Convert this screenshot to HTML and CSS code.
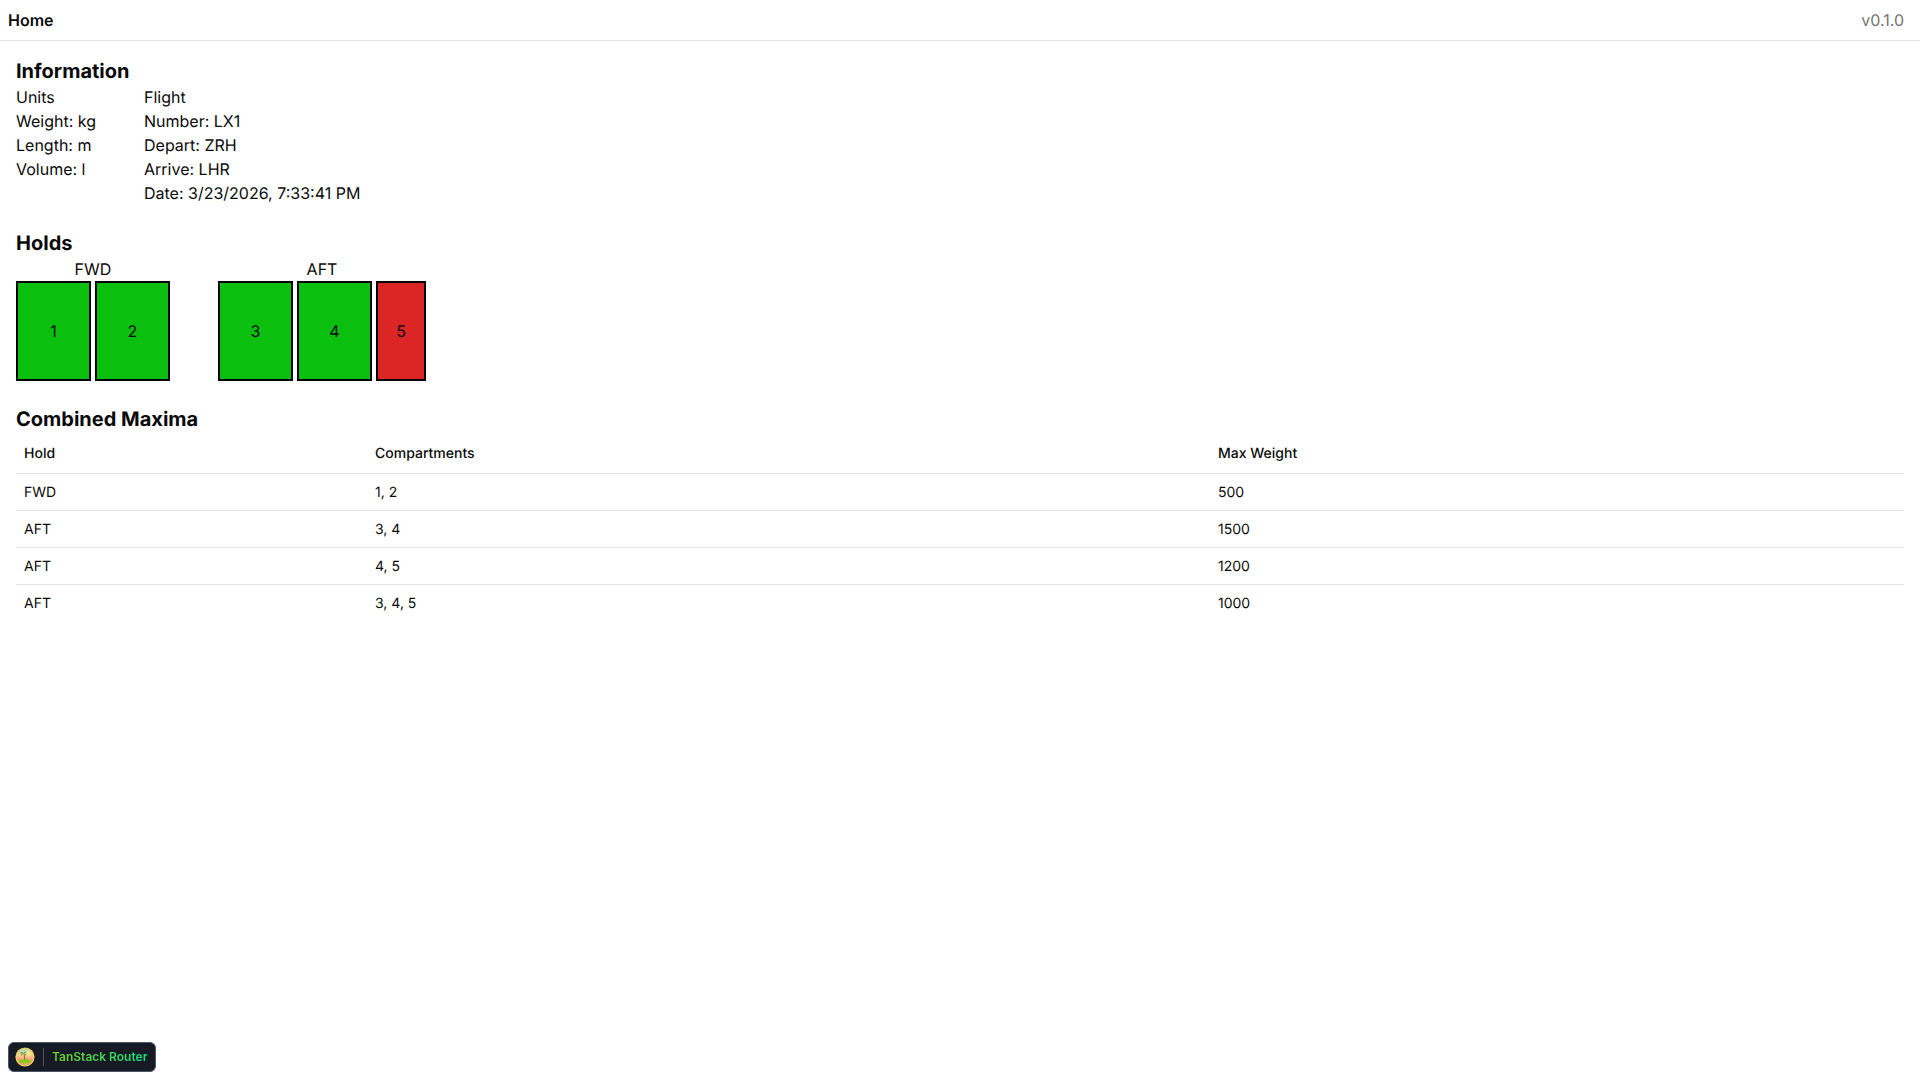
FILE: index.html
```html
<!DOCTYPE html>
<html lang="en">
<head>
    <meta charset="UTF-8">
    <meta name="viewport" content="width=device-width, initial-scale=1.0">
    <title>Home</title>
    <link rel="stylesheet" href="styles.css">
</head>
<body>
    <header class="topbar">
        <a class="home-link" href="#">Home</a>
        <span class="version">v0.1.0</span>
    </header>
    <main class="content">
        <section class="section">
            <h2>Information</h2>
            <div class="info-grid">
                <div class="info-col">
                    <div>Units</div>
                    <div>Weight: kg</div>
                    <div>Length: m</div>
                    <div>Volume: l</div>
                </div>
                <div>
                    <div>Flight</div>
                    <div>Number: LX1</div>
                    <div>Depart: ZRH</div>
                    <div>Arrive: LHR</div>
                    <div>Date: 3/23/2026, 7:33:41 PM</div>
                </div>
            </div>
        </section>
        <section class="section">
            <h2>Holds</h2>
            <div class="holds">
                <div class="hold">
                    <div class="hold-name">FWD</div>
                    <div class="compartments">
                        <div class="compartment ok">1</div>
                        <div class="compartment ok">2</div>
                    </div>
                </div>
                <div class="hold">
                    <div class="hold-name">AFT</div>
                    <div class="compartments">
                        <div class="compartment ok">3</div>
                        <div class="compartment ok">4</div>
                        <div class="compartment narrow over">5</div>
                    </div>
                </div>
            </div>
        </section>
        <section class="section">
            <h2>Combined Maxima</h2>
            <table class="maxima">
                <thead>
                    <tr>
                        <th class="col-hold">Hold</th>
                        <th class="col-comp">Compartments</th>
                        <th>Max Weight</th>
                    </tr>
                </thead>
                <tbody>
                    <tr><td>FWD</td><td>1, 2</td><td>500</td></tr>
                    <tr><td>AFT</td><td>3, 4</td><td>1500</td></tr>
                    <tr><td>AFT</td><td>4, 5</td><td>1200</td></tr>
                    <tr><td>AFT</td><td>3, 4, 5</td><td>1000</td></tr>
                </tbody>
            </table>
        </section>
    </main>
    <button class="devtools" type="button">
        <svg class="devtools-logo" viewBox="0 0 20 20" width="20" height="20" aria-hidden="true">
            <defs>
                <linearGradient id="sky" x1="0" y1="0" x2="0" y2="1">
                    <stop offset="0" stop-color="#a5e0c0"/>
                    <stop offset="0.4" stop-color="#fdd08a"/>
                    <stop offset="0.75" stop-color="#fb8a80"/>
                </linearGradient>
            </defs>
            <circle cx="10" cy="10" r="9.6" fill="#edd04a"/>
            <circle cx="10" cy="10" r="8.3" fill="url(#sky)"/>
            <circle cx="13.8" cy="6" r="2.5" fill="#fde68a"/>
            <path d="M2.4 13.2 H17.6 A8.3 8.3 0 0 1 2.4 13.2 Z" fill="#f59e7a"/>
            <path d="M3.6 14.8 C5.5 11 14.5 11 16.4 14.8 C14 16.8 6 16.8 3.6 14.8 Z" fill="#84cc16"/>
            <path d="M9.3 12.4 C9.5 10 9.1 8 8.4 6.6 L9 6.4 C9.9 8 10.2 10.2 10.1 12.4 Z" fill="#7a4a21"/>
            <path d="M8.7 6.6 C7.6 5 5.8 5 4.6 6.3 C5.9 6 7 6.1 8.7 6.6 Z M8.7 6.6 C7.6 6.7 5.9 7.4 5.6 9.2 C6.6 8.2 7.6 7.4 8.7 6.6 Z M8.7 6.6 C9.2 5 10.5 4.5 11.8 5 C10.7 5.2 9.8 5.8 8.7 6.6 Z M8.7 6.6 C10 6.4 11.2 7.2 11.5 8.7 C10.6 7.9 9.8 7.2 8.7 6.6 Z" fill="#178f44"/>
        </svg>
        <span class="devtools-divider"></span>
        <span class="devtools-label">TanStack Router</span>
    </button>
</body>
</html>
```

FILE: styles.css
```css
* {
    box-sizing: border-box;
}
body {
    margin: 0;
    background: #fff;
    color: #0a0a0a;
    font-family: Inter, "Liberation Sans", sans-serif;
    font-size: 16px;
    line-height: 24px;
    text-rendering: geometricPrecision;
}
.topbar {
    display: flex;
    align-items: center;
    justify-content: space-between;
    height: 41px;
    padding: 8px 16px 8px 8px;
    border-bottom: 1px solid #e5e5e5;
}
.home-link {
    color: inherit;
    font-weight: 600;
    text-decoration: none;
}
.version {
    color: #737373;
}
.content {
    display: flex;
    flex-direction: column;
    gap: 24px;
    padding: 16px;
}
h2 {
    margin: 0;
    font-size: 20px;
    font-weight: 700;
    line-height: 28px;
}
.info-grid {
    display: flex;
}
.info-col {
    width: 128px;
}
.holds {
    display: flex;
    gap: 48px;
}
.hold-name {
    text-align: center;
}
.compartments {
    display: flex;
    gap: 4px;
}
.compartment {
    display: flex;
    align-items: center;
    justify-content: center;
    width: 75px;
    height: 100px;
    border: 2px solid #000;
}
.compartment.narrow {
    width: 50px;
}
.ok {
    background: #0bbf0e;
}
.over {
    background: #dc2626;
}
.maxima {
    width: 100%;
    border-collapse: collapse;
    font-size: 14px;
    line-height: 20px;
}
.maxima th {
    height: 40px;
    padding: 2px 8px 0;
    font-weight: 500;
    text-align: left;
}
.maxima td {
    padding: 9px 8px 7px;
}
.maxima tr {
    border-bottom: 1px solid #e5e5e5;
}
.maxima tbody tr:last-child {
    border-bottom: 0;
}
.col-hold {
    width: 351px;
}
.col-comp {
    width: 843px;
}
.devtools {
    position: fixed;
    left: 8px;
    bottom: 8px;
    display: flex;
    align-items: center;
    height: 30px;
    padding: 0 8px 0 6px;
    border: 1px solid #4b5563;
    border-radius: 6px;
    background: #151a25;
    font-family: Inter, "Liberation Sans", sans-serif;
}
.devtools-logo {
    flex: none;
}
.devtools-divider {
    width: 1px;
    height: 18px;
    margin: 0 8px;
    background: #4b5563;
}
.devtools-label {
    background: linear-gradient(to right, #76d41c, #14e584);
    -webkit-background-clip: text;
    background-clip: text;
    color: transparent;
    font-size: 12px;
    font-weight: 600;
    line-height: 16px;
}
```
